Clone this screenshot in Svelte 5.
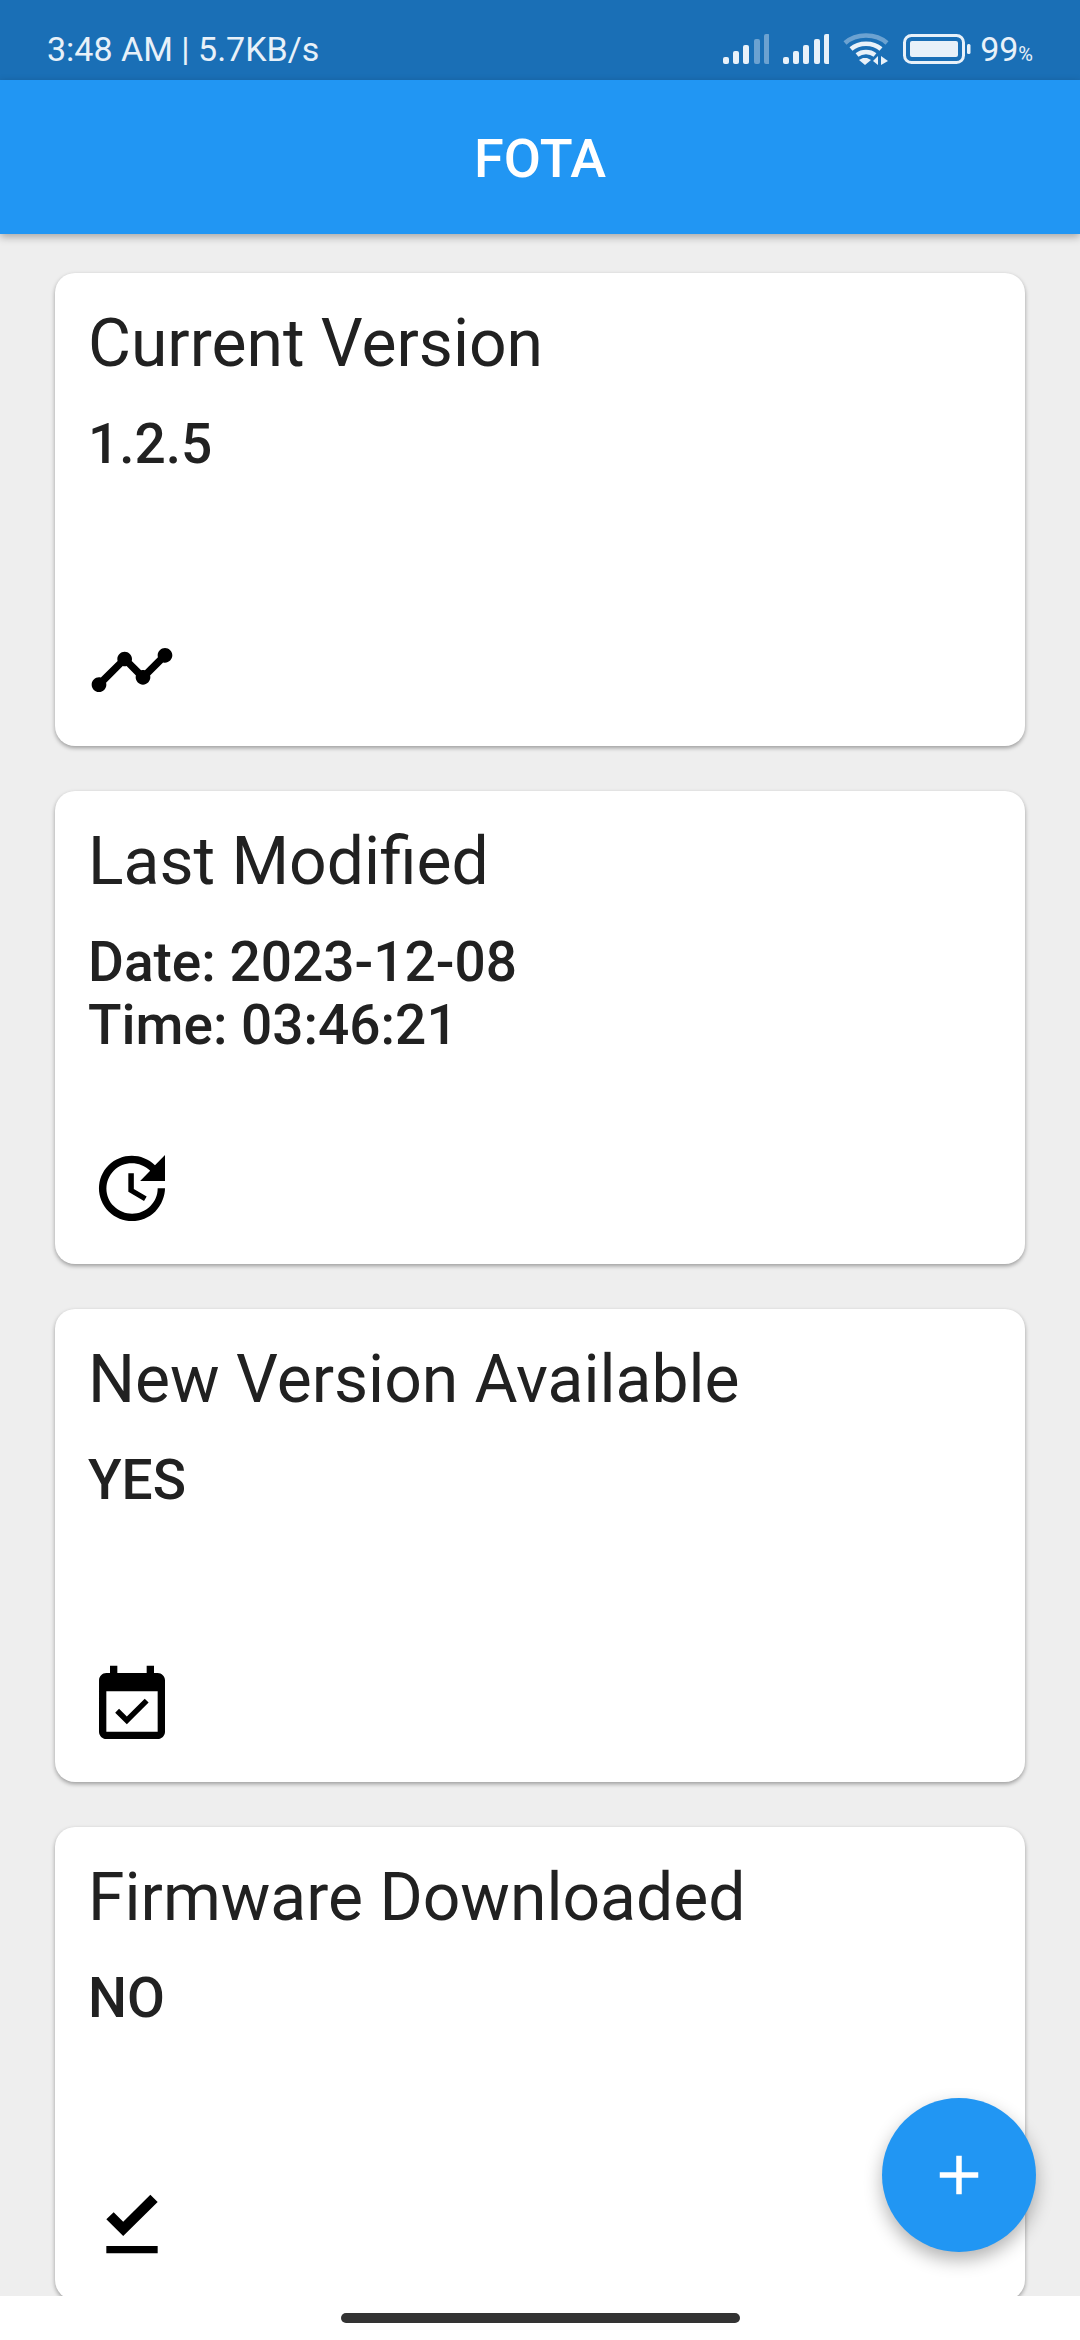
<script>
  const cards = [
    { title: "Current Version", lines: ["1.2.5"], icon: "timeline" },
    { title: "Last Modified", lines: ["Date: 2023-12-08", "Time: 03:46:21"], icon: "update" },
    { title: "New Version Available", lines: ["YES"], icon: "event" },
    { title: "Firmware Downloaded", lines: ["NO"], icon: "done" }
  ];

  const icons = {
    timeline:
      "M23 8c0 1.1-.9 2-2 2-.18 0-.35-.02-.51-.07l-3.56 3.55c.05.16.07.34.07.52 0 1.1-.9 2-2 2s-2-.9-2-2c0-.18.02-.36.07-.52l-2.55-2.55c-.16.05-.34.07-.52.07s-.36-.02-.52-.07l-4.55 4.56c.05.16.07.33.07.51 0 1.1-.9 2-2 2s-2-.9-2-2 .9-2 2-2c.18 0 .35.02.51.07l4.56-4.55C8.02 9.36 8 9.18 8 9c0-1.1.9-2 2-2s2 .9 2 2c0 .18-.02.36-.07.52l2.55 2.55c.16-.05.34-.07.52-.07s.36.02.52.07l3.55-3.56C19.02 8.35 19 8.18 19 8c0-1.1.9-2 2-2s2 .9 2 2z",
    update:
      "M21 10.12h-6.78l2.74-2.82c-2.73-2.7-7.15-2.8-9.88-.1-2.73 2.71-2.73 7.08 0 9.79s7.15 2.71 9.88 0C18.32 15.65 19 14.08 19 12.1h2c0 1.98-.88 4.55-2.64 6.29-3.51 3.48-9.21 3.48-12.72 0-3.5-3.47-3.53-9.11-.02-12.58s9.14-3.47 12.65 0L21 3v7.12zM12.5 8v4.25l3.5 2.08-.72 1.21L11 13V8h1.5z",
    event:
      "M16.53 11.06L15.47 10l-4.88 4.88-2.12-2.12-1.06 1.06L10.59 17l5.94-5.94zM19 3h-1V1h-2v2H8V1H6v2H5c-1.11 0-1.99.9-1.99 2L3 19c0 1.1.89 2 2 2h14c1.1 0 2-.9 2-2V5c0-1.1-.9-2-2-2zm0 16H5V8h14v11z",
    done: "M5 18h14v2H5v-2zm4.6-2.7L5 10.7l2-1.9 2.6 2.6L17 4l2 2-9.4 9.3z"
  };

  const bars = [
    { x: 0, h: 7 },
    { x: 10, h: 13 },
    { x: 20, h: 19 },
    { x: 31, h: 25 },
    { x: 41, h: 30 }
  ];
</script>

<div class="screen">
  <div class="status">
    <span class="status-text">3:48 AM | 5.7KB/s</span>
    <div class="status-icons">
      <svg class="signal" width="46" height="30" viewBox="0 0 46 30">
        {#each bars as bar, i}
          <rect x={bar.x} y={30 - bar.h} width="6" height={bar.h} rx="2" opacity={i > 2 ? 0.4 : 1} />
        {/each}
      </svg>
      <svg class="signal" width="46" height="30" viewBox="0 0 46 30">
        {#each bars as bar}
          <rect x={bar.x} y={30 - bar.h} width="6" height={bar.h} rx="2" />
        {/each}
      </svg>
      <svg class="wifi" width="46" height="34" viewBox="0 0 46 34">
        <path d="M2 11 C13 1 33 1 44 11" opacity="0.4" />
        <path d="M8 17 C16 10 30 10 38 17" />
        <path d="M14 23 C19 19 27 19 32 23" />
        <polygon class="solid" points="22,33 16,28 20,26 24,26 28,28" />
        <polygon class="solid" points="35,24 35,33 30,29" />
        <polygon class="solid" points="38,24 38,33 45,29" />
      </svg>
      <svg class="battery" width="68" height="30" viewBox="0 0 68 30">
        <rect class="shell" x="1.5" y="1.5" width="59" height="27" rx="7" />
        <rect class="level" x="7" y="7" width="48" height="16" rx="2" />
        <rect class="level" x="64" y="10" width="3.5" height="10" rx="1.5" />
      </svg>
      <span class="status-text battery-text">99<small>%</small></span>
    </div>
  </div>

  <header class="appbar">FOTA</header>

  <main class="list">
    {#each cards as card}
      <section class="card">
        <h2>{card.title}</h2>
        <div class="value">
          {#each card.lines as line}
            <div>{line}</div>
          {/each}
        </div>
        <svg class="icon" viewBox="0 0 24 24"><path d={icons[card.icon]} /></svg>
      </section>
    {/each}
  </main>

  <div class="navbar"><div class="pill"></div></div>

  <button class="fab" aria-label="Add">
    <svg viewBox="0 0 24 24"><path d="M19 13h-6v6h-2v-6H5v-2h6V5h2v6h6v2z" /></svg>
  </button>
</div>

<style>
  :global(body) {
    margin: 0;
    background: #eeeeee;
  }

  .screen {
    position: relative;
    display: flex;
    flex-direction: column;
    width: 1080px;
    height: 2340px;
    overflow: hidden;
    font-family: Roboto, "Liberation Sans", sans-serif;
    color: #212121;
  }

  .status {
    display: flex;
    flex-shrink: 0;
    align-items: center;
    justify-content: space-between;
    height: 80px;
    padding: 18px 47px 0;
    box-sizing: border-box;
    background: #1a6fb6;
  }

  .status-text {
    font-size: 34px;
    color: #e8f1f9;
  }

  .status-icons {
    display: flex;
    align-items: center;
    gap: 14px;
  }

  .signal rect {
    fill: #e8f1f9;
  }

  .wifi path {
    fill: none;
    stroke: #e8f1f9;
    stroke-width: 4.5;
  }

  .wifi .solid {
    fill: #e8f1f9;
  }

  .shell {
    fill: none;
    stroke: #e8f1f9;
    stroke-width: 3;
  }

  .level {
    fill: #e8f1f9;
  }

  .battery-text {
    margin-left: -5px;
    font-size: 34px;
  }

  .battery-text small {
    font-size: 20px;
  }

  .appbar {
    position: relative;
    z-index: 1;
    flex-shrink: 0;
    height: 154px;
    line-height: 158px;
    text-align: center;
    font-size: 54px;
    font-weight: 500;
    color: #ffffff;
    background: #2196f3;
    box-shadow: 0 3px 8px rgba(0, 0, 0, 0.3);
  }

  .list {
    display: flex;
    flex: 1;
    flex-direction: column;
    gap: 45px;
    min-height: 0;
    padding: 39px 55px 0;
    overflow: hidden;
  }

  .card {
    display: flex;
    flex-direction: column;
    flex-shrink: 0;
    height: 473px;
    padding: 0 33px 32px;
    box-sizing: border-box;
    background: #ffffff;
    border-radius: 20px;
    box-shadow: 0 2px 4px rgba(0, 0, 0, 0.35);
  }

  h2 {
    margin: 33px 0 0;
    font-size: 66px;
    line-height: 76px;
    font-weight: 400;
  }

  .value {
    margin-top: 31px;
    font-size: 55px;
    line-height: 63px;
    font-weight: 500;
  }

  .icon {
    width: 88px;
    height: 88px;
    margin-top: auto;
    fill: #000000;
  }

  .navbar {
    display: flex;
    flex-shrink: 0;
    justify-content: center;
    height: 44px;
    padding-top: 17px;
    box-sizing: border-box;
    background: #ffffff;
  }

  .pill {
    width: 399px;
    height: 10px;
    border-radius: 5px;
    background: #333333;
  }

  .fab {
    position: absolute;
    left: 882px;
    top: 2098px;
    display: flex;
    align-items: center;
    justify-content: center;
    width: 154px;
    height: 154px;
    padding: 0;
    border: none;
    border-radius: 50%;
    background: #2196f3;
    box-shadow: 0 8px 18px rgba(0, 0, 0, 0.3);
  }

  .fab svg {
    width: 66px;
    height: 66px;
    fill: #ffffff;
  }
</style>
